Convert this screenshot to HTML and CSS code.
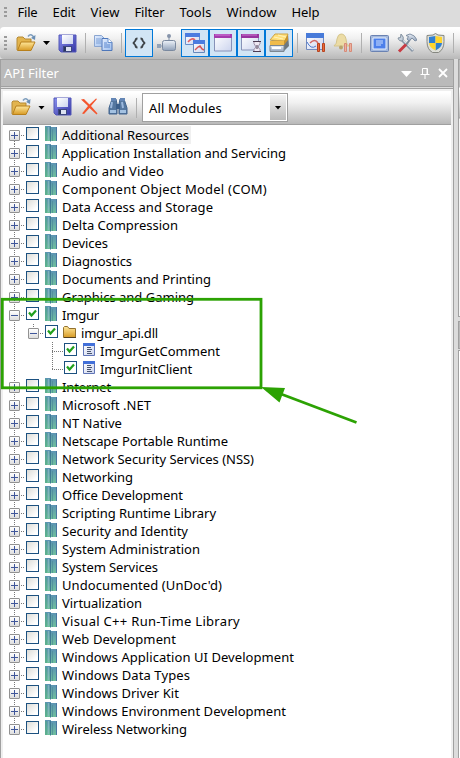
FILE: index.html
```
<!DOCTYPE html>
<html lang="en">
<head>
<meta charset="utf-8">
<title>API Filter</title>
<link rel="stylesheet" href="styles.css">
</head>
<body>
<svg class="defs" aria-hidden="true">
  <defs>
    <linearGradient id="gold" x1="0" y1="0" x2="0" y2="1"><stop offset="0" stop-color="#ffe79a"/><stop offset="1" stop-color="#d79a25"/></linearGradient>
    <linearGradient id="blue" x1="0" y1="0" x2="1" y2="1"><stop offset="0" stop-color="#8a92ee"/><stop offset="1" stop-color="#3434a4"/></linearGradient>
    <linearGradient id="steel" x1="0" y1="0" x2="0" y2="1"><stop offset="0" stop-color="#eef3fa"/><stop offset="1" stop-color="#8fa0b8"/></linearGradient>
    <linearGradient id="paper" x1="0" y1="0" x2="1" y2="1"><stop offset="0" stop-color="#fff"/><stop offset="1" stop-color="#ccd4ee"/></linearGradient>
    <linearGradient id="page" x1="0" y1="0" x2="1" y2="1"><stop offset="0" stop-color="#e4eeff"/><stop offset="1" stop-color="#9dbdec"/></linearGradient>
    <linearGradient id="teal" x1="0" y1="0" x2="0" y2="1"><stop offset="0" stop-color="#5c93b4"/><stop offset="1" stop-color="#6fc09c"/></linearGradient>
    <symbol id="open" viewBox="0 0 20 20">
      <path d="M1 17V5l1-1h5l2 2h6v3" fill="#e2b44e" stroke="#b58a34"/>
      <path d="M1.500 17.500 5 9h14l-4 8.500Z" fill="url(#gold)" stroke="#b8801c"/>
      <path d="M12 3.500q3-4 6 1" fill="none" stroke="#7d9dbd" stroke-width="1.500"/><path d="m19.500 2-.5 5-4-2Z" fill="#6b8fb4"/>
    </symbol>
    <symbol id="save" viewBox="0 0 19 19">
      <path d="M1 1h17v17H3l-2-2Z" fill="url(#blue)" stroke="#5357b8"/>
      <path d="M4 1h11v9H4Z" fill="url(#paper)"/><path d="M5 12h9v6H5Z" fill="#3d4780"/><path d="M8 13h5v4H8Z" fill="#dce2f1"/><path d="M6 13h2v4H6Z" fill="#29345e"/>
    </symbol>
    <symbol id="copy" viewBox="0 0 20 18">
      <path d="M1.500 1.500h7l3 3v8h-10Z" fill="url(#page)" stroke="#8aa5d0"/><path d="M3 5h5M3 7h5M3 9h5" stroke="#7fa1d5"/>
      <path d="M9 4.500h6l4 4v8H9Z" fill="url(#page)" stroke="#4e77ba"/><path d="M15 4.500v4h4" fill="#fff" stroke="#6690cf"/><path d="M11 9h3M11 11h6M11 13h6" stroke="#5c88cf"/>
    </symbol>
    <symbol id="book" viewBox="0 0 12 16">
      <path d="M0 0h6v15H0Z" fill="url(#teal)"/><path d="M5 1h7v14H5Z" fill="url(#teal)"/>
      <path d="M0 1h2v14H0Z" fill="#4fa684" opacity=".55"/><path d="M3.500 1v13" stroke="#8fbcc2" opacity=".7"/><path d="M5.500 1v14.500" stroke="#3f7892"/><path d="M7.500 3v12" stroke="#4d8b98" opacity=".7"/><path d="M11.500 1v14" stroke="#4977a1"/>
    </symbol>
    <symbol id="folder" viewBox="0 0 13 12"><path d="M.5 11.500V1.500l1-1h3l1.500 2h6.500v9Z" fill="url(#gold)" stroke="#93712f"/><path d="M1 11.500h12" stroke="#55411f"/></symbol>
    <symbol id="func" viewBox="0 0 12 13"><path d="M.5.5h11v12H.5Z" fill="url(#paper)" stroke="#6075b7"/><path d="M0 0h12v3H0Z" fill="#4270d9"/><path d="M4 4.500h4M4 6.500h5M4 8.500h4M4 10.500h5" stroke="#47536e"/></symbol>
  </defs>
</svg>

<nav class="menubar">
  <i class="grip grip-menu"></i>
  <span class="fit" data-w="20">File</span><span class="fit" data-w="23">Edit</span><span class="fit" data-w="29">View</span><span class="fit" data-w="30">Filter</span><span class="fit" data-w="32">Tools</span><span class="fit" data-w="50">Window</span><span class="fit" data-w="28">Help</span>
</nav>

<div class="toolbar main-tools">
  <i class="grip"></i>
  <svg class="ico open" width="20" height="20"><use href="#open"/></svg>
  <i class="caret"></i>
  <svg class="ico save" width="19" height="19"><use href="#save"/></svg>
  <i class="sep s1"></i>
  <svg class="ico copy" width="20" height="18"><use href="#copy"/></svg>
  <i class="sep s2"></i>
  <b class="tool code"><svg width="14" height="12"><path d="M5.500 1.500Q3.500 1.500 3.500 3.500L1.500 6l2 2.500q0 2 2 2M8.500 1.500q2 0 2 2l2 2.500-2 2.500q0 2-2 2" fill="none" stroke="#3c4146" stroke-width="1.800"/></svg></b>
  <svg class="ico plug" width="20" height="18"><path d="M12 1v7M2 12h5" stroke="#a3afbf" stroke-width="1.500"/><circle cx="12" cy="2" r="2" fill="#8694aa"/><path d="M0 10h4v4H0Z" fill="#93a2b7"/><rect x="5.500" y="6.500" width="13" height="10" rx="2" fill="url(#steel)" stroke="#7a899f"/></svg>
  <b class="tool first"><svg width="20" height="20"><path d="M.5.5h14v11H.5Z" fill="url(#paper)" stroke="#6890cc"/><path d="M0 0h15v4H0Z" fill="#4b7ce0"/><path d="M3 9q4-5 7-2" fill="none" stroke="#e06062" stroke-width="1.500"/><path d="M8.500 8.500h11v11h-11Z" fill="url(#paper)" stroke="#6588bc"/><path d="M8 7h12v4H8Z" fill="#4b7ce0"/><path d="m10 17 3-3 2-1 2 3 2 1" fill="none" stroke="#d45355" stroke-width="1.400"/></svg></b>
  <b class="tool"><svg width="18" height="18"><path d="M.5 1h17v16H.5Z" fill="url(#paper)" stroke="#8792b8"/><path d="M0 0h18v4H0Z" fill="#a43aad"/><path d="M1 1h15" stroke="#d27cda"/></svg></b>
  <b class="tool"><svg width="20" height="18"><path d="M.5 1h17v15H.5Z" fill="url(#paper)" stroke="#8792b8"/><path d="M0 0h18v4H0Z" fill="#97339f"/><path d="M1 1h15" stroke="#ca79d0"/><path d="M13 7.500h6v2L17 13l2 2.500v2h-6v-2l2-2.500-2-3.500Z" fill="#eee8f4" stroke="#9a8ca5"/><path d="M12 7.500h8M12 17.500h8M16 11v4" stroke="#4a3a52"/></svg></b>
  <b class="tool"><svg width="21" height="20"><path d="m1 10 5-9h13l1 12-6 6H1Z" fill="#6d7880"/><path d="m1 7 5-6h13l-3 7Z" fill="#ffe07a" stroke="#cfa447"/><path d="M1 8h14v4H1Z" fill="#f0bb4a"/><path d="m15 8 4-6v5l-4 5Z" fill="#c8942f"/><path d="M1 12.500h14v6H1Z" fill="url(#steel)" stroke="#7c8791"/><path d="M3 14h9v2H3Z" fill="#fff"/><path d="m5 4 9 2M9 2l8 2" stroke="#fff2ba"/></svg></b>
  <i class="sep s3"></i>
  <svg class="ico graph" width="20" height="20"><path d="M.5.5h17v16H.5Z" fill="url(#paper)" stroke="#7189bd"/><path d="M0 0h18v5H0Z" fill="#477ad9"/><path d="M4 10q5-5 8 0" fill="none" stroke="#d16765" stroke-width="1.500"/><path d="M1 9q4 8 9 4" fill="none" stroke="#4b77cc"/><path d="M11.500 10.500h2v8h-2ZM16.500 10.500h2v8h-2Z" fill="#e8693a" stroke="#b8431f"/></svg>
  <svg class="ico bell" width="20" height="20"><path d="M1 13q3-2 3-7 1-5 4-5 4 0 5 5 0 5 3 7Z" fill="#ecdca5" stroke="#d5c58c"/><circle cx="8" cy="14.500" r="2" fill="#b9a46b"/><path d="M11.500 10.500h2v8h-2ZM16.500 10.500h2v8h-2Z" fill="#eeb09f" stroke="#d68b78"/></svg>
  <i class="sep s4"></i>
  <svg class="ico screen" width="19" height="17"><rect x=".5" y=".5" width="18" height="16" rx="1" fill="#a3b8dc" stroke="#6a82b2"/><path d="M3 3h13v11H3Z" fill="#4d80ea" stroke="#e9f1ff"/><path d="M6 6h7M6 8h7M6 10h5" stroke="#cfe0ff"/></svg>
  <svg class="ico wrench" width="20" height="20"><path d="m4 6 12 12" stroke="#8795a6" stroke-width="2.800"/><path d="m4 5 12 12" stroke="#dae2e8" stroke-width="1.200"/><path d="M4 1 3.500 4.500 1 5q1 4 5 2.500Q7.500 4 4 1" fill="#c6d0dc" stroke="#8492a0"/><path d="m9 12 5-7" stroke="#7c8a98" stroke-width="2"/><path d="m2 18.500 7-7" stroke="#c83a42" stroke-width="3"/><path d="m9 2.500 4-1.500q5 1 7 6l-2 1-3-3-3 3-2-2 1.500-2.500Z" fill="url(#steel)" stroke="#8090a4"/></svg>
  <svg class="ico shield" width="19" height="20"><path d="M9.500.5 12 2l6 .500v6q0 8-5.500 11h-6Q1 16.500 1 8.500v-6L7 2Z" fill="#dedfd8" stroke="#858780"/><path d="M9.500 3 3 4v6h6.500ZM9.500 17.500Q16 14 16 10H9.500Z" fill="#2e7fd3"/><path d="M9.500 3 16 4v6H9.500ZM9.500 17.500Q3 14 3 10h6.500Z" fill="#ffd52c"/></svg>
  <i class="sep s5"></i>
</div>

<main class="work">
  <section class="pane">
    <header class="title"><span class="fit" data-w="55">API Filter</span>
      <svg width="50" height="14"><path d="M0 5h11L5.500 11Z" fill="#fff"/><path d="M21.500 2.500h5v6h-5ZM19.500 8.500h9M24 9v4M26 3v5" fill="none" stroke="#fff"/><path d="m38 3 8 8m0-8-8 8" stroke="#fff" stroke-width="1.800"/></svg>
    </header>
    <div class="content">
      <div class="toolbar filter-tools">
        <svg class="ico open" width="20" height="20"><use href="#open"/></svg>
        <i class="caret"></i>
        <svg class="ico save" width="19" height="19"><use href="#save"/></svg>
        <svg class="ico del" width="17" height="17"><path d="m0 1.500 3-.500 5.500 5.500L15 .5l1 .5-6 7 6.500 7.500-1 1L8.500 10 3 16l-2-.5L7 8Z" fill="#f4562f"/></svg>
        <svg class="ico binoc" width="20" height="19"><path d="M4 2h4l1 5 0 10H1V11ZM12 2h4l3 9v6h-8l0-10Z" fill="#55779f" stroke="#42658f"/><path d="M8 7h4v5H8Z" fill="#3c5f8b"/><path d="M3 1h5v3H3ZM12 1h5v3h-5Z" fill="#6486b5"/><path d="M4 5 3 11M14 5l1 6" stroke="#9bb8dd" stroke-width="2"/><path d="M2 13h6v3H2ZM12 13h6v3h-6Z" fill="#a4c2e2"/></svg>
        <i class="sep"></i>
        <div class="combo"><span class="fit" data-w="73">All Modules</span><b><i class="caret"></i></b></div>
      </div>
      <div class="tree" id="tree"></div>
    </div>
  </section>
  <aside class="side"><div class="dock-a"></div><div class="dock-b"></div><div class="dock-c"></div></aside>
</main>
<svg class="annotation" width="460" height="758"><rect x="2.300" y="299.300" width="258.700" height="88.500" fill="none" stroke="#2ca203" stroke-width="2.800"/><path d="m281 394 75.500 28.500" stroke="#2ca203" stroke-width="2.800"/><path d="m261 387 24 1-5.500 14.500Z" fill="#2ca203"/></svg>
<script src="tree.js"></script>
</body>
</html>
```
FILE: styles.css
```
* { box-sizing: border-box; }
body { margin: 0; width: 460px; height: 758px; overflow: hidden; background: #dcdcdc; color: #000; font: 13px/18px "Noto Sans", "Open Sans", sans-serif; display: flex; flex-direction: column; }
svg { display: block; flex: none; }
.defs { position: absolute; width: 0; height: 0; }
.fit { white-space: pre; }
.menubar { height: 27px; flex: none; display: flex; align-items: center; gap: 15px; padding: 0 0 3px 4px; }
.menubar .fit { flex: none; }
.menubar .fit:nth-of-type(1) { margin-left: -4.5px; }
.grip { width: 3px; height: 15px; flex: none; background: repeating-linear-gradient(#9b9b9b 0 2px, transparent 2px 4px); }
.grip-menu { height: 11px; }
.toolbar { display: flex; align-items: center; background: linear-gradient(#fff 5%, #f1f1f1 35%, #b9b9b9); }
.main-tools { height: 32px; flex: none; padding-left: 4px; border-radius: 4px 0 0 4px; }
.ico { flex: none; }
.caret { width: 7px; height: 4px; flex: none; background: #000; clip-path: polygon(0 0, 100% 0, 50% 100%); }
.open + .caret { margin-left: 7px; }
.main-tools .open { margin-left: 9px; }
.main-tools .save { margin-left: 8px; }
.sep { width: 1px; height: 20px; flex: none; background: #b0b0b0; }
.s1 { margin-left: 8px; }
.copy { margin-left: 7px; }
.s2 { margin-left: 8px; }
.tool { width: 28px; height: 28px; flex: none; display: grid; place-items: center; background: #d2e5f5; border: 1px solid #0078d7; }
.code { margin-left: 3px; }
.plug { margin-left: 4px; }
.first { margin-left: 4px; }
.s3 { margin-left: 4px; }
.graph { margin-left: 8px; }
.bell { margin-left: 7px; }
.s4 { margin-left: 8px; }
.screen { margin-left: 8px; }
.wrench { margin-left: 8px; }
.shield { margin-left: 9px; }
.s5 { margin-left: 8px; }
.work { flex: 1; min-height: 0; display: flex; gap: 4px; }
.pane { width: 454px; flex: none; border: solid #a0a0a0; border-width: 1px 1px 0; display: flex; flex-direction: column; }
.title { height: 27px; flex: none; display: flex; justify-content: space-between; align-items: center; padding: 0 2px 0 3px; background: #bababa; color: #fff; border-bottom: 1px solid #a0a0a0; }
.content { flex: 1; margin-top: 1px; border-top: 1px solid #a0a0a0; padding: 2px 2px 0; background: #efefef; display: flex; flex-direction: column; }
.filter-tools { height: 34px; flex: none; padding-left: 8px; border-bottom: 1px solid #a0a0a0; }
.filter-tools .ico { margin-bottom: 2px; }
.filter-tools .save { margin-left: 8px; }
.filter-tools .del { margin-left: 9px; }
.filter-tools .binoc { margin-left: 10px; }
.filter-tools .sep { margin-left: 8px; }
.combo { width: 146px; height: 29px; margin-left: 5px; padding: 1px 1px 1px 6px; display: flex; justify-content: space-between; align-items: center; background: #fff; border: 1px solid #a0a0a0; }
.combo b { width: 16px; height: 25px; display: grid; place-items: center; background: linear-gradient(#f3f3f3, #bcbcbc); }
.tree { flex: 1; background: #fff; padding: 1px 0 0 6px; }
.row { height: 18px; display: flex; align-items: flex-start; }
.guide { width: 19px; height: 18px; flex: none; }
.line { background: repeating-linear-gradient(#777 0 1px, transparent 1px 2px) 5px 0 / 1px 100% no-repeat; }
.node { width: 17px; height: 18px; flex: none; padding-top: 4px; background: repeating-linear-gradient(#777 0 1px, transparent 1px 2px) 5px 0 / 1px 18px no-repeat, repeating-linear-gradient(90deg, #777 0 1px, transparent 1px 2px) 12px 9px / 3px 1px no-repeat; }
.node.start { background-position: 5px 9px, 12px 9px; }
.node.end { background-size: 1px 8px, 3px 1px; }
.box { display: block; width: 11px; height: 11px; border: 1px solid #929292; border-radius: 1px; background: linear-gradient(90deg, #3f569a, #3f569a) 1px 4px / 7px 1px no-repeat, linear-gradient(#fff, #ddd); }
.box.plus { background: linear-gradient(#3f569a, #3f569a) 4px 1px / 1px 7px no-repeat, linear-gradient(#3f569a, #3f569a) 1px 4px / 7px 1px no-repeat, linear-gradient(#fff, #ddd); }
.leaf { width: 36px; height: 18px; flex: none; background: repeating-linear-gradient(#777 0 1px, transparent 1px 2px) 24px 0 / 1px 18px no-repeat, repeating-linear-gradient(90deg, #777 0 1px, transparent 1px 2px) 24px 9px / 11px 1px no-repeat; }
.leaf.end { background-size: 1px 9px, 11px 1px; }
.check { width: 13px; height: 13px; flex: none; margin-top: 1px; border: 1px solid #1c5180; background: linear-gradient(135deg, #dcdcd7, #fff 80%); }
.check.on { background: #fff; }
.kind { margin-left: 6px; }
.l1 .kind { margin: 2px 0 0 5px; }
.l2 .kind { margin-top: 1px; }
.label { height: 18px; margin-left: 3px; padding: 0 2px; flex: none; }
.selected { background: #f0f0f0; }
.side { width: 2px; display: flex; flex-direction: column; }
.dock-a { height: 258px; border: solid #a0a0a0; border-width: 1px 0 1px 1px; background: linear-gradient(#bababa 27px, #fff 28px, #bababa 57px, #a0a0a0 58px, #f4f4f4 59px); }
.dock-b { height: 28px; margin-top: 4px; border: solid #a0a0a0; border-width: 1px 0 1px 1px; background: #bababa; }
.dock-c { flex: 1; margin-top: 1px; border: solid #a0a0a0; border-width: 1px 0 0 1px; background: #fff; }
.annotation { position: absolute; left: 0; top: 0; }
```
FILE: tree.js
```
// [label, text width, level, state]
const rows = [
  ["Additional Resources", 127], ["Application Installation and Servicing", 224], ["Audio and Video", 102],
  ["Component Object Model (COM)", 205], ["Data Access and Storage", 151], ["Delta Compression", 116],
  ["Devices", 46], ["Diagnostics", 70], ["Documents and Printing", 149], ["Graphics and Gaming", 132],
  ["Imgur", 37, 0, "open"], ["imgur_api.dll", 77, 1, "open"], ["ImgurGetComment", 120, 2, "open"], ["ImgurInitClient", 92, 2, "last"],
  ["Internet", 49], ["Microsoft .NET", 89], ["NT Native", 60], ["Netscape Portable Runtime", 166],
  ["Network Security Services (NSS)", 192], ["Networking", 71], ["Office Development", 121],
  ["Scripting Runtime Library", 154], ["Security and Identity", 126], ["System Administration", 138],
  ["System Services", 96], ["Undocumented (UnDoc'd)", 160], ["Virtualization", 80],
  ["Visual C++ Run-Time Library", 178], ["Web Development", 114], ["Windows Application UI Development", 232],
  ["Windows Data Types", 128], ["Windows Driver Kit", 117], ["Windows Environment Development", 224], ["Wireless Networking", 125]
];
const kinds = [["book", 12, 16], ["folder", 13, 12], ["func", 12, 13]];
const tick = '<svg width="11" height="11"><path d="m2 4.500 2.500 3L9 2.500" fill="none" stroke="#22a01d" stroke-width="2.200"/></svg>';

document.getElementById("tree").innerHTML = rows.map(([label, width, level = 0, state], i) => {
  const [kind, w, h] = kinds[level];
  const edge = i === 0 ? "start" : i === rows.length - 1 || level === 1 ? "end" : "";
  const guide = level === 1 ? '<i class="guide line"></i>' : "";
  const node = level === 2
    ? `<i class="guide line"></i><i class="leaf ${state === "last" ? "end" : ""}"></i>`
    : `<i class="node ${edge}"><b class="box ${state ? "" : "plus"}"></b></i>`;
  return `<div class="row l${level}">${guide}${node}<i class="check ${state ? "on" : ""}">${state ? tick : ""}</i>` +
    `<svg class="kind" width="${w}" height="${h}"><use href="#${kind}"/></svg>` +
    `<span class="label ${i ? "" : "selected"}"><span class="fit" data-w="${width}">${label}</span></span></div>`;
}).join("");

document.querySelectorAll(".fit").forEach(el => {
  const natural = el.getBoundingClientRect().width;
  el.style.letterSpacing = (el.dataset.w - natural) / el.textContent.length + "px";
});
```
